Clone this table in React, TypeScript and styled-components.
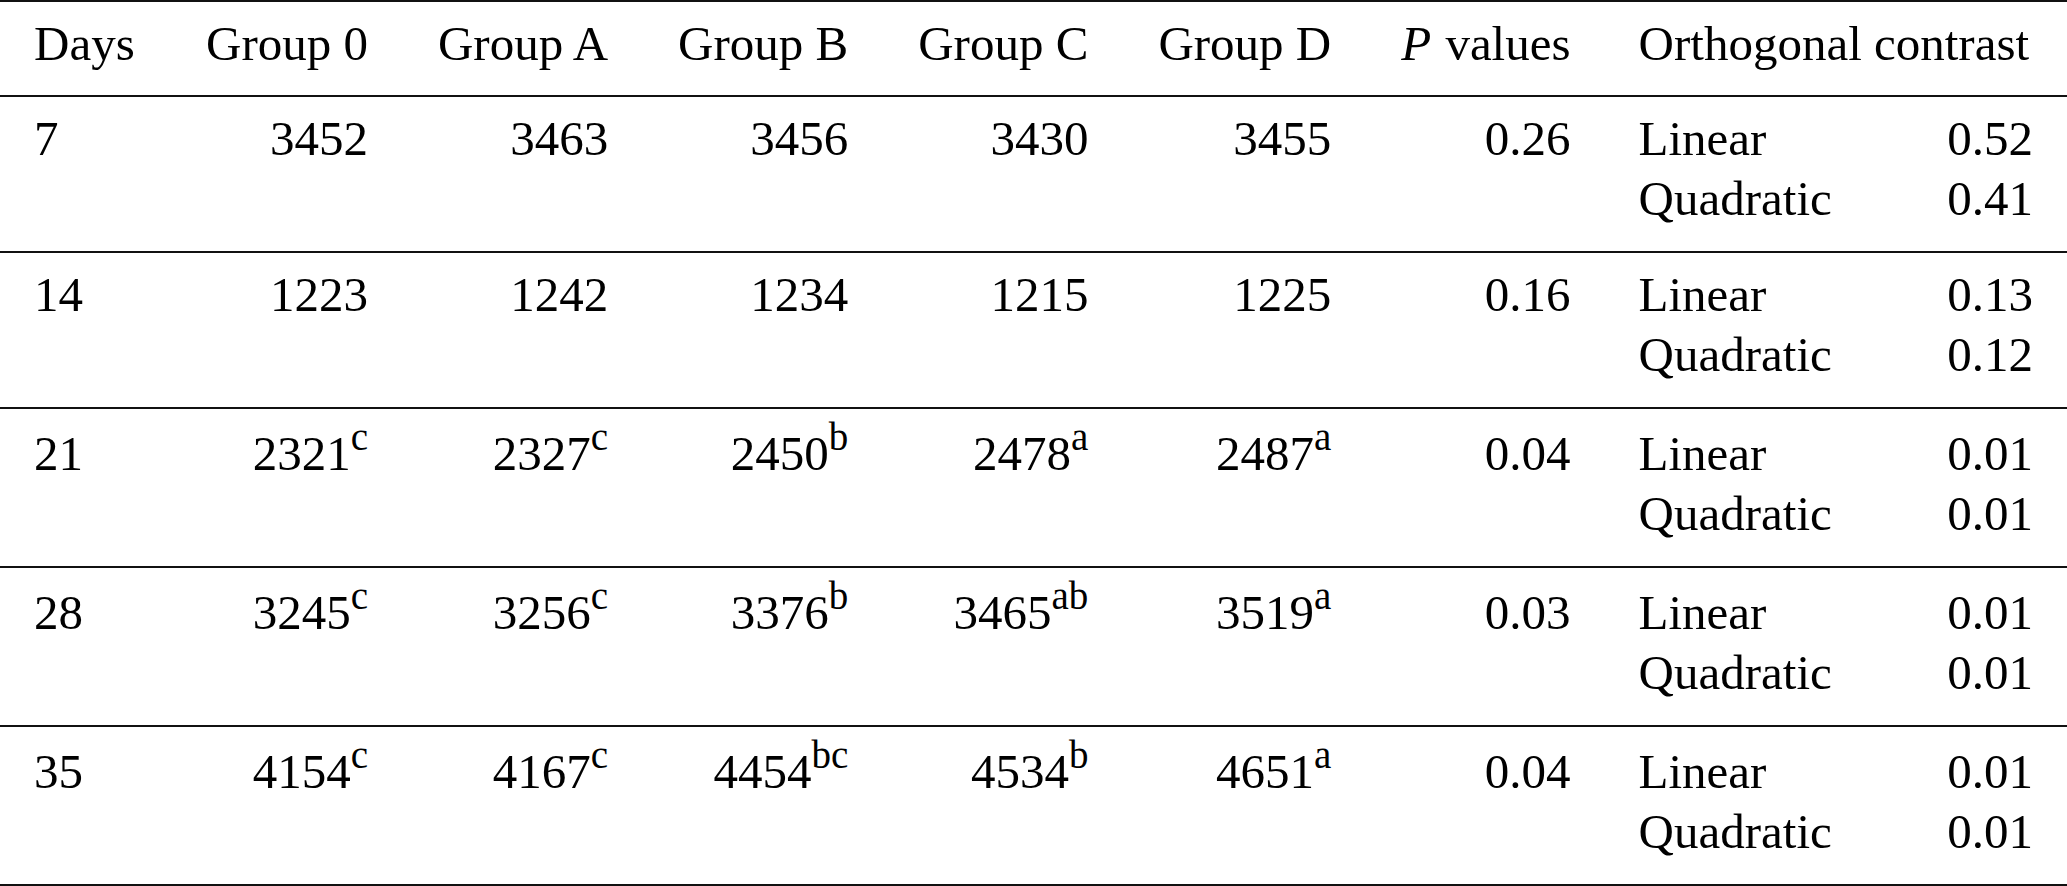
import React from 'react';
import styled, { createGlobalStyle } from 'styled-components';

interface Value {
  n: string;
  mark?: string;
}

interface Row {
  day: string;
  groups: Value[];
  p: string;
  linear: string;
  quadratic: string;
}

const rows: Row[] = [
  {
    day: '7',
    groups: [{ n: '3452' }, { n: '3463' }, { n: '3456' }, { n: '3430' }, { n: '3455' }],
    p: '0.26',
    linear: '0.52',
    quadratic: '0.41'
  },
  {
    day: '14',
    groups: [{ n: '1223' }, { n: '1242' }, { n: '1234' }, { n: '1215' }, { n: '1225' }],
    p: '0.16',
    linear: '0.13',
    quadratic: '0.12'
  },
  {
    day: '21',
    groups: [
      { n: '2321', mark: 'c' },
      { n: '2327', mark: 'c' },
      { n: '2450', mark: 'b' },
      { n: '2478', mark: 'a' },
      { n: '2487', mark: 'a' }
    ],
    p: '0.04',
    linear: '0.01',
    quadratic: '0.01'
  },
  {
    day: '28',
    groups: [
      { n: '3245', mark: 'c' },
      { n: '3256', mark: 'c' },
      { n: '3376', mark: 'b' },
      { n: '3465', mark: 'ab' },
      { n: '3519', mark: 'a' }
    ],
    p: '0.03',
    linear: '0.01',
    quadratic: '0.01'
  },
  {
    day: '35',
    groups: [
      { n: '4154', mark: 'c' },
      { n: '4167', mark: 'c' },
      { n: '4454', mark: 'bc' },
      { n: '4534', mark: 'b' },
      { n: '4651', mark: 'a' }
    ],
    p: '0.04',
    linear: '0.01',
    quadratic: '0.01'
  }
];

const groupNames = ['Group 0', 'Group A', 'Group B', 'Group C', 'Group D'];

const GlobalStyle = createGlobalStyle`
  html, body {
    margin: 0;
    padding: 0;
    background: #ffffff;
  }
  body {
    font-family: "Liberation Serif", "Times New Roman", serif;
    color: #000000;
  }
`;

const Table = styled.table`
  width: 100%;
  border-collapse: separate;
  border-spacing: 0;
  font-family: "Liberation Serif", "Times New Roman", serif;
  font-size: 49px;
  color: #000;
`;

const HeadCell = styled.th<{ $align?: 'left' | 'right' }>`
  font-weight: normal;
  text-align: ${({ $align }) => $align ?? 'right'};
  line-height: 60px;
  padding: 12px 34px 21px;
  border-top: 2px solid #111;
  border-bottom: 2px solid #111;
  white-space: nowrap;
`;

const Cell = styled.td<{ $align?: 'left' | 'right'; $marked?: boolean }>`
  text-align: ${({ $align }) => $align ?? 'right'};
  vertical-align: top;
  line-height: 60px;
  padding: ${({ $marked }) => ($marked ? '15px' : '12px')} 34px 22px;
  border-bottom: 2px solid #111;
  white-space: nowrap;
`;

const Mark = styled.sup`
  font-size: 39px;
  line-height: 0;
  vertical-align: 20px;
`;

const Italic = styled.em`
  font-style: italic;
  margin-right: 2px;
`;

const Contrast = styled.div`
  display: grid;
  grid-template-columns: 1fr auto;
  text-align: left;
`;

const ContrastValue = styled.span`
  text-align: right;
`;

export default function App() {
  return (
    <>
      <GlobalStyle />
      <Table>
        <thead>
          <tr>
            <HeadCell $align="left">Days</HeadCell>
            {groupNames.map((g) => (
              <HeadCell key={g}>{g}</HeadCell>
            ))}
            <HeadCell>
              <Italic>P</Italic> values
            </HeadCell>
            <HeadCell $align="left">Orthogonal contrast</HeadCell>
          </tr>
        </thead>
        <tbody>
          {rows.map((row) => {
            const marked = row.groups.some((g) => g.mark);
            return (
              <tr key={row.day}>
                <Cell $align="left" $marked={marked}>
                  {row.day}
                </Cell>
                {row.groups.map((g, i) => (
                  <Cell key={i} $marked={marked}>
                    {g.n}
                    {g.mark && <Mark>{g.mark}</Mark>}
                  </Cell>
                ))}
                <Cell $marked={marked}>{row.p}</Cell>
                <Cell $marked={marked}>
                  <Contrast>
                    <span>Linear</span>
                    <ContrastValue>{row.linear}</ContrastValue>
                    <span>Quadratic</span>
                    <ContrastValue>{row.quadratic}</ContrastValue>
                  </Contrast>
                </Cell>
              </tr>
            );
          })}
        </tbody>
      </Table>
    </>
  );
}
